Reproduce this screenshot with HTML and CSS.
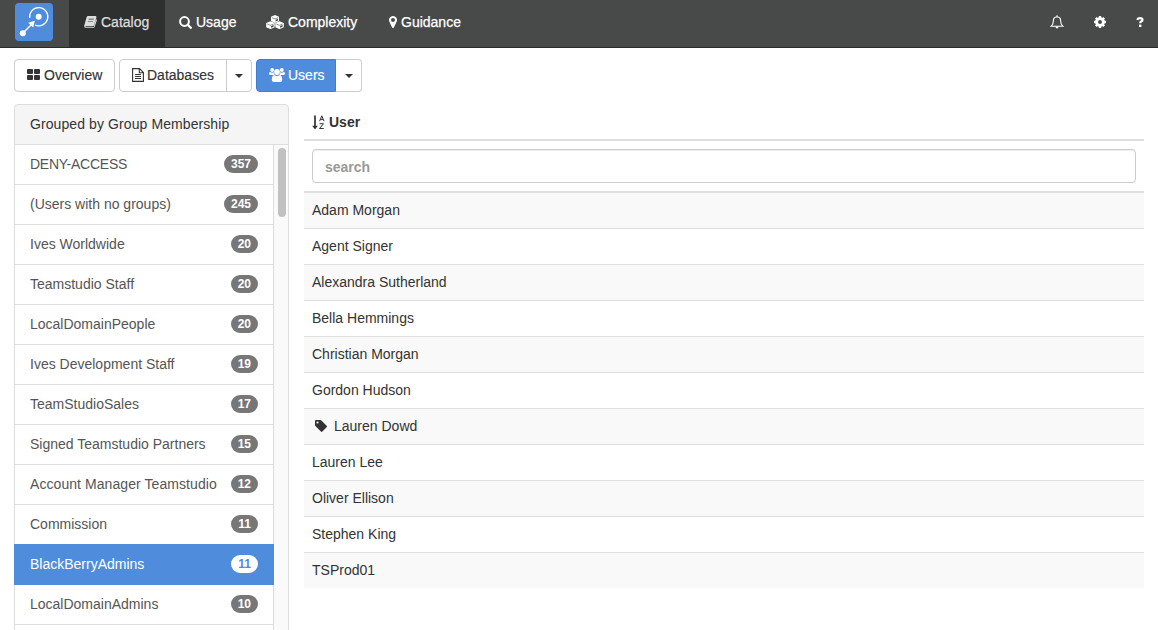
FILE: index.html
```html
<!DOCTYPE html>
<html lang="en">
<head>
<meta charset="utf-8">
<title>Catalog - Users</title>
<link rel="stylesheet" href="styles.css">
</head>
<body>
<header class="navbar">
  <a class="brand"><svg width="38" height="38" viewBox="0 0 38 38"><rect width="38" height="38" rx="4" fill="#508cdc"/><g fill="none" stroke="#fff"><path d="M14.700 15A9.100 9.100 0 1 1 20 22" stroke-width="1.300"/><path d="M8 30 17 21" stroke-width="1.500"/></g><circle cx="23.700" cy="13.700" r="3" fill="#fff"/><circle cx="7.800" cy="30.300" r="3" fill="#fff"/><path d="m19.800 17.800-1.600 6.700-5-4.800z" fill="#fff"/></svg></a>
  <nav class="tabs">
    <a class="tab tab-catalog"><svg width="13" height="12" viewBox="0 0 13 12"><path fill="currentColor" fill-rule="evenodd" d="M4 0h7.4q1.3.2 1 1.500L10 9.200q-.4 1-1.500 1H2q-.7.100-.5.700.2.400.8.400h6.800q.5 0 .7-.6l2.300-7.400q1 .3.700 1.200L10.600 11q-.4 1-1.500 1H2Q.1 11.800.2 9.800L2.600 1.200Q3 .1 4 0zM4.700 2.700l-.2.700h5.200l.2-.7zm-.7 2.200-.2.700h5.200l.2-.7z"/></svg><span>Catalog</span></a>
    <a class="tab tab-usage"><svg width="13" height="13" viewBox="0 0 13 13"><circle cx="5.500" cy="5.500" r="4.400" fill="none" stroke="currentColor" stroke-width="2"/><path d="m8.800 8.800 3 3" stroke="currentColor" stroke-width="2.300" stroke-linecap="round"/></svg><span>Usage</span></a>
    <a class="tab tab-complexity"><svg width="18" height="14" viewBox="0 0 18 14"><g fill="currentColor"><path d="M9 .1 13 1.800v4.300L9 8 5 6.100V1.800z"/><path d="m4.500 6.300 4.200 1.800v4.200l-4.200 1.800-4.300-1.800V8.100zM13.500 6.300l4.300 1.800v4.200l-4.300 1.800-4.200-1.800V8.100z"/></g><g fill="none" stroke="#484a49" stroke-width=".6"><path d="m6 2.700 3 1.200 3-1.200M1.300 9l3.200 1.300L7.700 9M10.300 9l3.200 1.300L16.700 9"/></g><g fill="#484a49"><path d="m9.600 4.700 2.400-1v1.700L9.600 6.500zM5.100 11l2.500-1v1.700l-2.500 1.100zM14.100 11l2.500-1v1.700l-2.500 1.100z"/></g></svg><span>Complexity</span></a>
    <a class="tab tab-guidance"><svg width="8" height="12" viewBox="0 0 8 12"><path fill="currentColor" fill-rule="evenodd" d="M4 0a4 4 0 0 1 3.700 5.500L4.900 11.400q-.9 1.100-1.800 0L.3 5.500A4 4 0 0 1 4 0zm0 2a2 2 0 1 0 0 4 2 2 0 0 0 0-4z"/></svg><span>Guidance</span></a>
  </nav>
  <div class="tools">
    <svg width="14" height="14" viewBox="0 0 14 14"><path d="M7 .2v1.500M7 1.700C4.500 1.900 3.400 3.500 3.400 5.500c0 3-.8 4.500-2.200 5.700h11.600c-1.400-1.200-2.200-2.700-2.200-5.700 0-2-1.100-3.600-3.600-3.800z" fill="none" stroke="#fff" stroke-width="1.100"/><path d="M5.400 11.600h3.200q-.3 1.900-1.600 1.900t-1.600-1.900z" fill="#fff"/></svg>
    <svg width="12" height="12" viewBox="0 0 12 12"><circle cx="6" cy="6" r="3.400" fill="none" stroke="#fff" stroke-width="2.900"/><path d="M6 0v2M6 10v2M0 6h2M10 6h2M1.800 1.800l1.400 1.400M8.800 8.800l1.400 1.400M1.800 10.200l1.400-1.400M8.800 3.200l1.400-1.400" stroke="#fff" stroke-width="2.400"/></svg>
    <svg width="8" height="10" viewBox="0 0 8 10"><path d="M1.200 2.900Q2 1.200 3.900 1.200q2.600 0 2.600 1.800 0 1-1.300 1.600-1 .5-1 1.700" fill="none" stroke="#fff" stroke-width="2.200"/><path d="M3 7.600h2.400V10H3z" fill="#fff"/></svg>
  </div>
</header>
<div class="toolbar">
  <a class="btn btn-overview"><svg width="13" height="11" viewBox="0 0 13 11"><path fill="currentColor" d="M1 0h4q1 0 1 1v3q0 1-1 1H1Q0 5 0 4V1q0-1 1-1zM8 0h4q1 0 1 1v3q0 1-1 1H8Q7 5 7 4V1q0-1 1-1zM1 6h4q1 0 1 1v3q0 1-1 1H1q-1 0-1-1V7q0-1 1-1zM8 6h4q1 0 1 1v3q0 1-1 1H8q-1 0-1-1V7q0-1 1-1z"/></svg><span>Overview</span></a>
  <div class="btn-group">
    <a class="btn btn-databases"><svg width="12" height="14" viewBox="0 0 12 14"><path d="M.6.600h6.900l3.900 3.900v8.900H.600zM7.300.600v4.100h4.100M3 6.500h6M3 8.500h6M3 10.500h6" fill="none" stroke="currentColor" stroke-width="1.100"/></svg><span>Databases</span></a>
    <a class="btn btn-caret"><i class="caret"></i></a>
  </div>
  <div class="btn-group">
    <a class="btn btn-users"><svg width="16" height="14" viewBox="0 0 16 14"><g fill="currentColor"><circle cx="3.200" cy="2" r="1.900"/><circle cx="12.800" cy="2" r="1.900"/><circle cx="8" cy="4" r="2.900"/><path d="M1 4q2 1.200 3.700.3-.2 1.700 1 2.700H1.700Q0 7 0 5.500 0 4.200 1 4zM15 4q-2 1.200-3.700.3.200 1.700-1 2.700h4Q16 7 16 5.500 16 4.200 15 4zM5.300 7.100q2.700 2 5.400 0 2.500.3 2.500 4.800 0 2.100-2 2.100H4.800q-2 0-2-2.100 0-4.500 2.500-4.800z"/></g></svg><span>Users</span></a>
    <a class="btn btn-caret"><i class="caret"></i></a>
  </div>
</div>
<main class="content">
  <aside class="panel">
    <div class="panel-head">Grouped by Group Membership</div>
    <div class="panel-body">
      <ul class="groups">
        <li><span class="tight">DENY-ACCESS</span><b>357</b></li>
        <li><span>(Users with no groups)</span><b>245</b></li>
        <li><span>Ives Worldwide</span><b>20</b></li>
        <li><span>Teamstudio Staff</span><b>20</b></li>
        <li><span>LocalDomainPeople</span><b>20</b></li>
        <li><span>Ives Development Staff</span><b>19</b></li>
        <li><span>TeamStudioSales</span><b>17</b></li>
        <li><span>Signed Teamstudio Partners</span><b>15</b></li>
        <li><span class="loose">Account Manager Teamstudio</span><b>12</b></li>
        <li><span>Commission</span><b>11</b></li>
        <li class="active"><span>BlackBerryAdmins</span><b>11</b></li>
        <li><span>LocalDomainAdmins</span><b>10</b></li>
        <li></li>
      </ul>
      <div class="scroll-track"><div class="scroll-thumb"></div></div>
    </div>
  </aside>
  <section class="users">
    <div class="users-head"><svg width="14" height="15" viewBox="0 0 14 15"><path d="M3 .5v12" stroke="currentColor" stroke-width="1.700"/><path d="M.2 10.800h5.600L3 14.400z" fill="currentColor"/><path d="m7.600 6.200 2.200-5.400L12 6.200M8.400 4.400h2.900M7.600 8.700h3.900l-4 4.800h4.200" fill="none" stroke="currentColor" stroke-width="1"/></svg><span>User</span></div>
    <div class="filter"><input class="search" type="text" placeholder="search"></div>
    <ul class="rows">
      <li>Adam Morgan</li>
      <li>Agent Signer</li>
      <li>Alexandra Sutherland</li>
      <li>Bella Hemmings</li>
      <li>Christian Morgan</li>
      <li>Gordon Hudson</li>
      <li><svg class="tag" width="12" height="12" viewBox="0 0 12 12"><path fill="currentColor" fill-rule="evenodd" d="M1 0h4q.8 0 1.400.6l5.200 5.200q.8.700 0 1.500l-4.200 4.200q-.8.800-1.500 0L.6 6.300Q0 5.700 0 5V1q0-1 1-1zm1.500 1.400a1.100 1.100 0 1 0 0 2.200 1.100 1.100 0 0 0 0-2.200z"/></svg>Lauren Dowd</li>
      <li>Lauren Lee</li>
      <li>Oliver Ellison</li>
      <li>Stephen King</li>
      <li>TSProd01</li>
    </ul>
  </section>
</main>
</body>
</html>
```
FILE: styles.css
```css
* { box-sizing: border-box; }
body {
  margin: 0;
  height: 630px;
  overflow: hidden;
  background: #fff;
  color: #333;
  font: 14px/20px "Liberation Sans", Arial, sans-serif;
}
ul { list-style: none; margin: 0; padding: 0; }
svg { display: block; flex: none; }
span { white-space: nowrap; }

.navbar {
  display: flex;
  height: 48px;
  background: #484a49;
  border-bottom: 1px solid #2b292b;
  color: #fff;
}
.brand { padding: 3px 16px 0 15px; }
.tabs { display: flex; flex: 1; -webkit-text-stroke: .25px currentColor; }
.tab { display: flex; align-items: center; padding-bottom: 3px; }
.tab-catalog { width: 96px; padding-left: 15px; gap: 4px; background: #2e302f; color: #ddd; }
.tab-usage { width: 88px; padding-left: 14px; gap: 4px; }
.tab-complexity { width: 122px; padding-left: 13px; gap: 4px; }
.tab-guidance { padding-left: 14px; gap: 4px; }
.tools { display: flex; align-items: center; gap: 30px; padding: 0 14px 3px 0; }

.toolbar { display: flex; gap: 4px; padding: 11px 14px 12px; }
.btn {
  display: flex;
  align-items: center;
  height: 33px;
  border: 1px solid #ccc;
  border-radius: 4px;
  padding: 0 0 2px 12px;
  gap: 4px;
  -webkit-text-stroke: .15px currentColor;
}
.btn-group { display: flex; }
.btn-group .btn:first-child { border-radius: 4px 0 0 4px; gap: 3px; }
.btn-overview { width: 101px; }
.btn-databases { width: 108px; }
.btn-users { width: 80px; background: #508cdc; border-color: #3f7ed2; color: #fff; }
.btn-group .btn-caret { width: 26px; margin-left: -1px; padding: 0 0 0 8px; border-radius: 0 4px 4px 0; }
.btn-users + .btn-caret { margin-left: 0; border-left: 0; padding-left: 9px; }
.caret { border: 4px solid transparent; border-top-color: #333; border-bottom: 0; }

.content { display: flex; gap: 15px; padding: 0 14px; }
.panel { width: 275px; height: 526px; overflow: hidden; }
.panel-head {
  height: 41px;
  padding: 9px 15px;
  background: #f5f5f5;
  border: 1px solid #ddd;
  border-radius: 4px 4px 0 0;
  letter-spacing: .09px;
}
.panel-body { display: flex; height: 485px; border-right: 1px solid #ddd; }
.groups { width: 260px; }
.groups li {
  display: flex;
  align-items: center;
  justify-content: space-between;
  height: 40px;
  padding: 0 15px 1px;
  border: 1px solid #ddd;
  border-top: 0;
  color: #555;
}
.tight { letter-spacing: -.25px; }
.loose { letter-spacing: .07px; }
.groups b {
  min-width: 27px;
  height: 18px;
  border-radius: 10px;
  padding: 0 7px;
  background: #777;
  color: #fff;
  font-size: 12px;
  line-height: 18px;
  text-align: center;
}
.groups .active { height: 41px; margin-top: -1px; padding-bottom: 0; background: #508cdc; border-color: #508cdc; color: #fff; }
.groups .active b { background: #fff; color: #508cdc; }
.scroll-track { flex: 1; background: #fafafa; padding: 3px 0 0 4px; }
.scroll-thumb { width: 8px; height: 69px; border-radius: 4px; background: #c1c1c1; }

.users { flex: 1; }
.users-head { display: flex; align-items: center; gap: 3px; height: 37px; padding: 1px 8px 0; border-bottom: 2px solid #ddd; font-weight: bold; }
.filter { height: 52px; padding: 8px; border-bottom: 2px solid #ddd; }
.search {
  display: block;
  width: 100%;
  height: 34px;
  padding: 7px 12px 5px;
  border: 1px solid #ccc;
  border-radius: 4px;
  box-shadow: inset 0 1px 1px rgba(0, 0, 0, .075);
  font: bold 14px/20px "Liberation Sans", Arial, sans-serif;
}
.search::placeholder { color: #999; opacity: 1; }
.rows li { display: flex; align-items: center; height: 36px; padding: 0 8px 1px; border-top: 1px solid #ddd; }
.rows li:first-child { height: 35px; border-top: 0; }
.rows li:nth-child(odd) { background: #f9f9f9; }
.tag { margin: 0 7px 0 3px; }
```
